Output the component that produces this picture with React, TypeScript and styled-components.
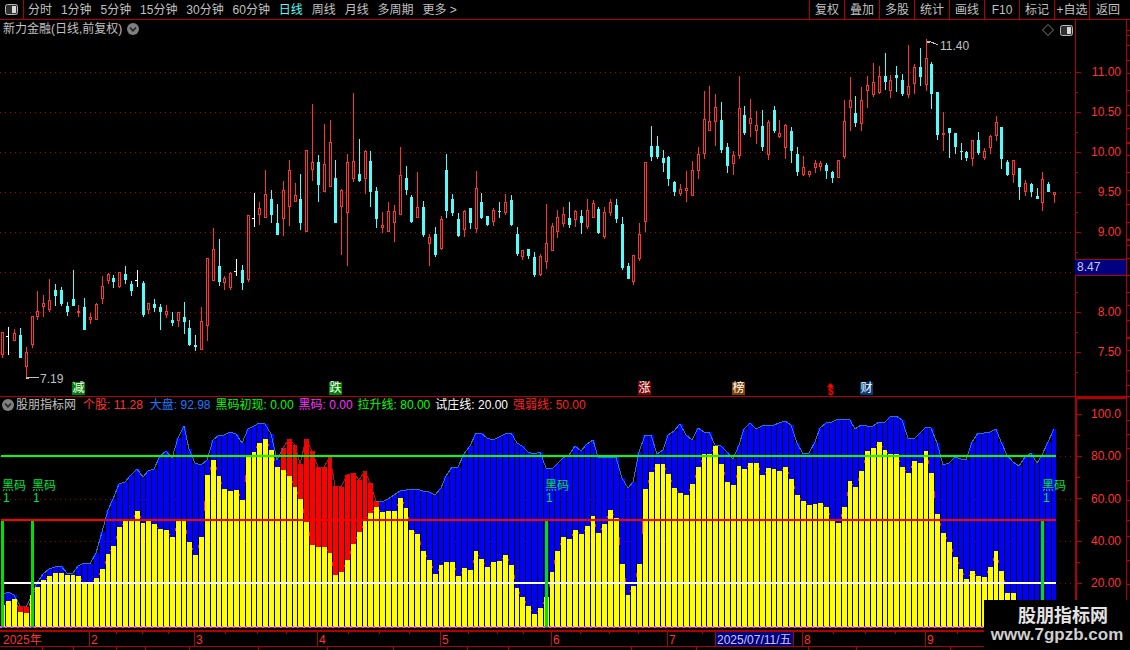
import React from 'react';
import styled, { createGlobalStyle } from 'styled-components';

const RED = '#ff3232';
const LINE = '#b00000';
const CYAN = '#54fcfc';
const FONT = '"Liberation Sans", "Noto Sans CJK SC", sans-serif';

const Global = createGlobalStyle`
  html, body { margin: 0; padding: 0; background: #000; }
  #root { width: 1130px; height: 650px; }
`;

const Page = styled.div`
  position: relative;
  width: 1130px;
  height: 650px;
  overflow: hidden;
  background: #000;
  font: 12px/14px ${FONT};
  color: #c0c0c0;
  display: flex;
  flex-direction: column;
`;

const Toolbar = styled.div`
  display: flex;
  align-items: stretch;
  height: 19px;
  flex: none;
  border-bottom: 1px solid ${LINE};
`;
const PanelToggle = styled.div`
  width: 23px;
  flex: none;
  border-right: 1px solid ${LINE};
  display: flex;
  align-items: center;
  justify-content: center;
`;
const Periods = styled.nav`
  display: flex;
  align-items: center;
  gap: 8.9px;
  padding-left: 4px;
`;
const Period = styled.span<{ $active?: boolean }>`
  white-space: nowrap;
  color: ${p => (p.$active ? CYAN : '#c0c0c0')};
`;
const Tools = styled.div`
  display: flex;
  margin-left: auto;
`;
const Tool = styled.span<{ $wide?: boolean }>`
  width: ${p => (p.$wide ? 41 : 35)}px;
  box-sizing: border-box;
  border-left: 1px solid ${LINE};
  display: flex;
  align-items: center;
  justify-content: ${p => (p.$wide ? 'flex-start' : 'center')};
  padding-left: ${p => (p.$wide ? 6 : 0)}px;
  white-space: nowrap;
`;

const PricePanel = styled.section`
  display: flex;
  height: 376px;
  flex: none;
  border-bottom: 1px solid ${LINE};
`;
const IndicatorPanel = styled.section`
  display: flex;
  height: 233px;
  flex: none;
  border-bottom: 2px solid ${LINE};
`;
const Plot = styled.div`
  position: relative;
  width: 1075px;
  flex: none;
`;
const AxisBox = styled.div`
  position: relative;
  width: 55px;
  flex: none;
`;
const Canvas = styled.svg`
  display: block;
  shape-rendering: crispEdges;
`;
const ChartText = styled.text<{ $fill?: string }>`
  font: 12px ${FONT};
  fill: ${p => p.$fill || RED};
  shape-rendering: auto;
`;

const TitleRow = styled.div`
  position: absolute;
  left: 3px;
  top: 2px;
  display: flex;
  align-items: center;
  gap: 5px;
  white-space: nowrap;
`;
const WindowTools = styled.div`
  position: absolute;
  right: 2px;
  top: 4px;
  display: flex;
  align-items: center;
  gap: 6px;
`;
const Legend = styled.div`
  position: absolute;
  left: 2px;
  top: 1px;
  display: flex;
  align-items: center;
  gap: 5px;
  white-space: nowrap;
`;
const LegendName = styled.span`
  margin: 0 2px 0 -3px;
`;
const LegendItem = styled.span<{ $color: string; $after?: number }>`
  color: ${p => p.$color};
  margin-right: ${p => p.$after || 0}px;
`;
const Marker = styled.span<{ $x: number; $bg: string }>`
  position: absolute;
  left: ${p => p.$x}px;
  top: 362px;
  width: 13px;
  height: 13px;
  background: ${p => p.$bg};
  color: #fff;
  font-size: 12px;
  line-height: 13px;
  text-align: center;
`;
const DollarMark = styled.span`
  position: absolute;
  left: 826px;
  top: 363px;
  width: 9px;
  display: flex;
  flex-direction: column;
  align-items: center;
  color: #ff0000;
  font: bold 10px/9px ${FONT};
`;
const PriceTag = styled.div`
  position: absolute;
  left: 0;
  top: 239px;
  width: 49px;
  height: 15px;
  padding-left: 2px;
  background: #000080;
  border-top: 1px solid ${LINE};
  border-bottom: 1px solid ${LINE};
  border-right: 1px solid ${LINE};
  color: #c8c8e8;
  line-height: 15px;
`;
const DateAxis = styled.div`
  height: 14px;
  flex: none;
  border-bottom: 1px solid ${LINE};
`;
const Footer = styled.div`
  height: 3px;
  flex: none;
`;
const Watermark = styled.div`
  position: absolute;
  right: 0;
  bottom: 0;
  width: 146px;
  height: 50px;
  background: #000;
  color: #e4e4e4;
  display: flex;
  flex-direction: column;
  align-items: center;
  padding-top: 2px;
  box-sizing: border-box;
  font-weight: bold;
`;
const WatermarkTitle = styled.div`
  font: bold 18px/24px "Noto Sans CJK SC", sans-serif;
  margin-left: 12px;
`;
const WatermarkUrl = styled.div`
  font: bold 17px/17px "Liberation Sans", sans-serif;
  color: #cfcfcf;
`;

type Kind = 'r' | 'c' | 'w';
type Row = [number, number, number, number, number, Kind];

const A: Row[] = [
  [8,457,457,525,533,'r'],[25,441,469,469,525,'w'],[44,447,459,483,483,'r'],[62,445,465,534,534,'c'],[80,501,517,560,590,'r'],
  [98,408,408,495,503,'r'],[112,333,393,411,419,'r'],[130,345,370,381,411,'r'],[148,297,361,389,397,'r'],[166,312,330,348,378,'c'],
  [184,321,330,372,378,'c'],[202,366,378,396,408,'c'],[220,270,357,378,378,'c'],[235,375,393,399,411,'r'],[253,354,381,450,450,'c'],
  [271,399,411,420,432,'r'],[289,370,372,420,420,'r'],[307,288,318,357,372,'r'],[325,280,282,303,312,'r'],[340,285,294,306,324,'c'],
  [358,276,277,321,324,'r'],[376,258,282,300,312,'c'],[394,303,312,333,348,'c'],[412,270,300,300,321,'w'],[430,303,309,405,411,'c'],
  [445,369,369,390,402,'r'],[463,357,372,385,396,'c'],[481,372,381,396,450,'c'],[499,375,393,405,414,'r'],[517,396,420,429,438,'c'],
  [535,396,396,423,441,'r'],[553,366,411,426,462,'c'],[568,420,444,495,498,'c'],[586,465,495,501,513,'c'],[604,381,423,510,511,'r'],
  [622,235,235,437,483,'r'],[640,144,207,303,303,'r'],[658,177,258,306,318,'c'],[673,288,294,309,330,'r'],[691,276,279,324,330,'r'],
  [709,237,273,273,288,'w'],[727,255,270,309,330,'c'],[745,105,105,300,306,'r'],[763,39,115,115,141,'w'],[778,66,84,105,135,'r'],
  [796,-30,42,114,114,'r'],[814,30,57,105,129,'c'],[832,72,129,165,165,'c'],[850,3,30,117,168,'r'],[868,-60,-30,81,138,'r'],
  [886,9,45,66,66,'r'],
];
const B: Row[] = [
  [0,282,357,430,450,'c'],[19,211,211,455,455,'r'],[37,72,247,271,303,'r'],[55,225,247,315,366,'c'],[73,132,253,335,336,'r'],
  [91,120,187,322,322,'r'],[106,240,294,429,429,'c'],[124,328,331,380,525,'r'],[142,222,247,398,558,'r'],[160,39,244,296,306,'r'],
  [178,177,282,303,306,'c'],[196,210,214,296,342,'r'],[211,213,243,336,381,'c'],[229,321,333,417,444,'c'],[247,396,435,443,459,'r'],
  [265,366,393,456,456,'r'],[283,375,393,429,486,'r'],[301,201,286,404,405,'r'],[319,258,294,330,345,'c'],[334,345,351,426,429,'c'],
  [352,276,381,413,414,'r'],[370,363,381,465,471,'c'],[388,462,471,491,558,'r'],[406,441,462,525,531,'c'],[424,408,417,507,510,'r'],
  [439,222,270,393,414,'c'],[457,342,357,399,408,'c'],[475,399,417,468,471,'c'],[493,390,393,450,471,'r'],[511,384,384,429,447,'c'],
  [529,273,324,447,459,'r'],[544,339,366,414,417,'c'],[562,408,408,435,438,'c'],[580,384,390,426,438,'r'],[598,366,393,396,414,'c'],
  [616,342,366,399,405,'r'],[634,345,360,435,438,'c'],[652,441,462,522,528,'c'],[667,510,511,530,540,'r'],[685,507,507,528,537,'c'],
  [703,516,531,585,591,'c'],[721,522,528,585,588,'r'],[739,372,489,545,567,'r'],[757,429,438,513,513,'r'],[772,390,411,456,474,'r'],
  [790,381,402,432,441,'r'],[808,366,414,435,444,'c'],[826,390,393,420,441,'r'],[844,390,408,429,462,'c'],[862,357,390,441,447,'r'],
  [880,360,369,414,414,'r'],[895,381,387,459,462,'c'],[913,381,396,471,477,'r'],[931,357,366,399,408,'r'],[949,357,375,417,429,'c'],
  [967,411,432,564,570,'c'],[985,549,558,597,597,'c'],[1000,525,526,606,615,'r'],[1018,429,462,537,543,'r'],
];
const C: Row[] = [
  [16,396,396,575,607,'r'],[34,288,348,381,392,'c'],[52,318,348,381,387,'c'],[70,360,384,399,426,'c'],[85,378,381,447,468,'c'],
  [103,453,456,486,498,'c'],[121,462,477,492,498,'r'],[139,423,474,483,516,'r'],[157,393,420,497,498,'r'],[175,351,372,423,447,'r'],
  [193,183,267,372,387,'r'],[208,168,273,303,303,'r'],[226,192,231,276,348,'r'],[244,216,270,360,369,'c'],[262,339,351,408,429,'c'],
  [280,363,375,402,435,'r'],[298,138,234,378,387,'r'],[313,228,255,309,315,'c'],[331,207,264,282,321,'r'],[349,243,285,303,342,'r'],
  [367,240,288,351,363,'c'],[385,270,276,375,390,'r'],[403,228,240,303,309,'c'],[418,270,309,321,324,'r'],[436,282,285,354,387,'r'],
  [454,291,303,363,399,'c'],[472,351,372,426,438,'c'],[490,378,411,435,438,'r'],[508,423,424,435,441,'r'],[526,390,399,414,429,'r'],
  [541,393,400,411,423,'r'],[559,399,405,423,447,'c'],[577,423,426,444,459,'c'],[595,390,391,443,444,'r'],[613,210,273,381,387,'r'],
  [631,141,210,234,303,'r'],[646,198,249,279,291,'c'],[664,171,210,282,303,'r'],[682,138,165,183,234,'r'],[700,99,156,195,201,'r'],
  [718,108,138,189,192,'r'],[736,69,138,156,180,'c'],[751,135,150,183,204,'r'],[769,108,135,144,186,'c'],[787,132,150,192,198,'c'],
  [805,45,168,195,204,'r'],[823,102,111,162,192,'r'],[841,54,111,141,168,'c'],[859,27,84,165,183,'r'],[874,96,102,192,237,'c'],
  [892,186,186,315,330,'c'],[910,246,309,315,363,'r'],[928,294,294,309,384,'c'],[946,309,309,351,372,'c'],[964,339,363,366,390,'c'],
  [979,363,366,384,393,'c'],[997,330,330,387,408,'r'],[1015,306,330,369,375,'c'],[1033,354,363,385,390,'r'],[1051,315,318,354,372,'r'],
  [1069,258,276,318,333,'r'],[1084,291,291,387,417,'c'],[1102,390,396,435,438,'c'],[1120,390,391,435,459,'r'],[1138,414,414,471,510,'c'],
  [1156,450,459,486,498,'r'],[1174,459,462,486,501,'c'],[1192,474,498,507,507,'c'],[1207,426,447,518,543,'r'],[1225,456,462,486,486,'c'],
  [1243,486,487,495,519,'r'],
];

interface Candle { x: number; wt: number; bt: number; bb: number; wb: number; kind: Kind; }
const toCandles = (rows: Row[], x0: number, y0: number): Candle[] =>
  rows.map(([z, a, b, c, d, kind]) => ({
    x: x0 + Math.floor(z / 3),
    wt: Math.round(y0 + a / 3),
    bt: Math.round(y0 + b / 3),
    bb: Math.round(y0 + c / 3),
    wb: Math.round(y0 + d / 3),
    kind,
  }));
const candles = [...toCandles(A, 0, 180), ...toCandles(B, 300, 80), ...toCandles(C, 640, 30)];

const yellowZ = [
  555,543,537,576,579,525,500,480,468,459,459,465,465,468,486,486,474,447,402,378,321,303,303,273,309,303,312,327,330,351,303,303,366,405,351,165,120,168,207,213,210,240,107,96,68,57,90,141,150,168,201,
  237,306,375,381,381,399,465,456,420,372,336,303,279,261,276,273,273,234,264,330,342,393,420,462,435,426,426,468,444,450,393,417,441,426,423,405,435,504,531,558,582,564,531,456,393,351,357,330,342,318,288,339,
  312,270,295,432,525,498,432,207,156,132,132,162,204,219,225,192,141,102,102,78,132,186,195,138,147,129,129,165,144,147,153,141,177,225,243,255,252,249,261,303,309,261,183,201,153,93,84,66,90,102,102,
  141,159,123,129,93,159,282,339,366,411,447,477,453,468,471,441,393,453,519,519,900,900,900,900,900,900,900,
];
const coverZ = [
  525,517,525,558,561,525,490,463,448,440,437,459,459,437,428,433,400,336,270,238,193,187,165,147,170,152,147,108,93,115,55,18,87,130,135,120,60,45,44,37,41,68,27,18,10,13,42,120,84,57,75,
  132,57,93,142,141,111,198,200,165,159,180,153,189,243,246,237,225,214,211,208,208,214,217,225,205,168,142,142,103,78,40,40,55,60,52,42,40,70,78,95,103,97,145,147,132,115,105,78,93,72,60,110,
  110,112,112,175,205,185,95,46,46,103,90,46,33,13,44,60,24,36,36,75,78,97,116,75,28,10,28,18,16,16,10,3,15,70,103,100,66,25,8,5,-3,-3,0,28,15,18,18,
  5,5,-10,-12,0,55,58,40,20,25,68,135,130,112,118,120,65,40,40,37,28,65,105,125,138,112,100,130,105,65,27,
];
const zy = (z: number) => Math.round(420 + z / 3);
const isRed = (i: number) => i === 3 || i === 4 || (i >= 48 && i <= 64);
const BASE = 627;

const barSlots = candles.map((c, i) => {
  const left = Math.max(1, c.x - 2);
  const next = i < candles.length - 1 ? candles[i + 1].x - 2 : c.x + 3;
  return { left, width: next - left - 1, cx: c.x };
});

const ToggleIcon = () => (
  <svg width="13" height="11" viewBox="0 0 13 11">
    <rect x="0.5" y="0.5" width="12" height="10" rx="2" fill="#303030" stroke="#b8b8b8" />
    <rect x="7" y="2" width="4" height="7" fill="#d8d8d8" />
  </svg>
);
const DropDot = () => (
  <svg width="12" height="12" viewBox="0 0 12 12">
    <circle cx="6" cy="6" r="6" fill="#808080" />
    <path d="M3 4.5 L6 7.8 L9 4.5" fill="none" stroke="#202020" strokeWidth="1.5" />
  </svg>
);
const DiamondIcon = () => (
  <svg width="12" height="12" viewBox="0 0 12 12">
    <path d="M6 0.5 L11.5 6 L6 11.5 L0.5 6 Z" fill="none" stroke="#808080" />
  </svg>
);
const UpArrow = () => (
  <svg width="7" height="4" viewBox="0 0 7 4">
    <path d="M3.5 0 L7 4 L0 4 Z" fill="#ff0000" />
  </svg>
);

const priceGrid = [72, 112, 152, 192, 232, 272, 312, 352];
const periods = ['分时', '1分钟', '5分钟', '15分钟', '30分钟', '60分钟', '日线', '周线', '月线', '多周期', '更多 >'];
const tools = ['复权', '叠加', '多股', '统计', '画线', 'F10', '标记', '+自选'];
const legendItems: [string, string, number][] = [
  ['个股: 11.28', '#ff3232', 2],
  ['大盘: 92.98', '#1e78ff', 0],
  ['黑码初现: 0.00', '#00ff00', 0],
  ['黑码: 0.00', '#ff32ff', 0],
  ['拉升线: 80.00', '#00ff00', 0],
  ['试庄线: 20.00', '#ffffff', 0],
  ['强弱线: 50.00', '#ff2020', 0],
];

const PriceChart = () => (
  <Canvas width="1075" height="376" viewBox="0 20 1075 376">
    {priceGrid.map(y => (
      <line key={y} x1="0" x2="1075" y1={y + 0.5} y2={y + 0.5} stroke="#b00000" strokeDasharray="1 4" />
    ))}
    {candles.map((c, i) => {
      const color = c.kind === 'r' ? RED : c.kind === 'c' ? CYAN : '#ffffff';
      return (
        <g key={i} fill={color}>
          <rect x={c.x} y={c.wt} width="1" height={Math.max(1, c.wb - c.wt)} />
          {c.kind === 'w' ? (
            <rect x={c.x - 2} y={c.bt} width="2" height="1" />
          ) : (
            <rect x={c.x - 1} y={c.bt} width="3" height={Math.max(1, c.bb - c.bt)} />
          )}
          {c.kind === 'r' && c.bb - c.bt > 2 && (
            <rect x={c.x} y={c.bt + 1} width="1" height={c.bb - c.bt - 2} fill="#000" />
          )}
        </g>
      );
    })}
    <g fill="#c0c0c0">
      <rect x="26" y="377" width="3" height="2" />
      <rect x="28" y="377" width="11" height="1" />
      <rect x="927" y="41" width="3" height="2" />
      <path d="M929 41 L938 45" stroke="#c0c0c0" fill="none" />
    </g>
    <ChartText x="40" y="383" $fill="#c0c0c0">7.19</ChartText>
    <ChartText x="940" y="50" $fill="#c0c0c0">11.40</ChartText>
  </Canvas>
);

const PriceAxis = () => (
  <Canvas width="55" height="376" viewBox="1075 20 55 376">
    <rect x="1075" y="20" width="1" height="376" fill={LINE} />
    <rect x="1126" y="20" width="1" height="376" fill={LINE} />
    {priceGrid.map(y => (
      <g key={y} fill={LINE}>
        <rect x="1075" y={y} width="6" height="1" />
        <rect x="1075" y={y + 20} width="3" height="1" />
      </g>
    ))}
    {[30, 35, 45, 60, 73, 90, 105, 115, 128, 155, 172, 190, 204, 222, 245, 258, 275, 292, 305, 320, 350, 370, 385].map(y => (
      <rect key={y} x="1127" y={y} width="3" height="1" fill={LINE} />
    ))}
    {[142, 239, 337].map(y => (
      <rect key={y} x="1127" y={y} width="3" height="2" fill={LINE} />
    ))}
    {[['11.00', 72], ['10.50', 112], ['10.00', 152], ['9.50', 192], ['9.00', 232], ['8.50', 272], ['8.00', 312], ['7.50', 352]].map(([t, y]) => (
      <ChartText key={t as string} x="1121" y={(y as number) + 4} textAnchor="end">{t}</ChartText>
    ))}
  </Canvas>
);

const blackCode = [
  { x: 2, n: 3 },
  { x: 32, n: 33 },
  { x: 545, n: 546 },
  { x: 1042, n: 1043 },
];
const greenBars = [0, 5, 93, 178];

const IndicatorChart = () => (
  <Canvas width="1075" height="233" viewBox="0 397 1075 233">
    {[456, 499, 541, 583].map(y => (
      <line key={y} x1="0" x2="1075" y1={y + 0.5} y2={y + 0.5} stroke="#a00000" strokeDasharray="1 4" />
    ))}
    {barSlots.map((s, i) => {
      const top = zy(coverZ[i]);
      const fill = isRed(i) ? '#ff0000' : '#0000ff';
      return <rect key={i} x={s.left} y={top} width={s.width} height={BASE - top} fill={fill} />;
    })}
    {barSlots.slice(1).map((s, i) => {
      const j = i + 1;
      const a = coverZ[j - 1];
      const b = coverZ[j];
      const red = isRed(j) && isRed(j - 1);
      return (
        <line
          key={j}
          x1={barSlots[j - 1].cx}
          y1={zy(a)}
          x2={s.cx}
          y2={zy(b)}
          stroke={red ? '#c01010' : '#1a78d8'}
          strokeWidth="1"
        />
      );
    })}
    {barSlots.map((s, i) => {
      const y = yellowZ[i];
      if (y >= 900) return null;
      const top = zy(y);
      return <rect key={i} x={s.left} y={top} width={s.width} height={BASE - top} fill="#ffff00" />;
    })}
    {barSlots.slice(1).map((s, i) => {
      const a = yellowZ[i];
      const b = yellowZ[i + 1];
      const d = Math.abs(a - b);
      if (d < 12 || a >= 900 || b >= 900) return null;
      const h = Math.max(1, Math.round(d / 18));
      const mid = zy((a + b) / 2);
      return <rect key={i} x={s.left - 1} y={mid - Math.floor(h / 2)} width="1" height={h} fill="#ff2020" />;
    })}
    <rect x="1" y="455" width="1055" height="2" fill="#00ff00" />
    <rect x="1" y="519" width="1055" height="2" fill="#ff0000" />
    <rect x="1" y="582" width="1055" height="2" fill="#ffffff" />
    {greenBars.map(i => (
      <rect key={i} x={Math.max(1, candles[i].x - 1)} y="521" width="3" height="106" fill="#00e000" />
    ))}
    <rect x="1" y="627" width="1055" height="1" fill="#7a20b0" />
    {barSlots.map((s, i) => (
      <rect key={i} x={s.left - 1} y="626" width="2" height="2" fill="#ff40ff" />
    ))}
    {blackCode.map(b => (
      <g key={b.x}>
        <ChartText x={b.x} y="490" $fill="#00e040">黑码</ChartText>
        <ChartText x={b.n} y="502" $fill="#00e040">1</ChartText>
      </g>
    ))}
  </Canvas>
);

const IndicatorAxis = () => (
  <Canvas width="55" height="233" viewBox="1075 397 55 233">
    <rect x="1075" y="397" width="2" height="233" fill={LINE} />
    <rect x="1075" y="397" width="52" height="2" fill={LINE} />
    <rect x="1126" y="397" width="1" height="233" fill={LINE} />
    {[414, 456, 498, 541, 583].map(y => (
      <rect key={y} x="1077" y={y} width="5" height="1" fill={LINE} />
    ))}
    {[435, 477, 520, 562, 604].map(y => (
      <rect key={y} x="1077" y={y} width="3" height="1" fill={LINE} />
    ))}
    {[420, 434, 448, 480, 500, 520, 536, 560, 584].map(y => (
      <rect key={y} x="1127" y={y} width="3" height="1" fill={LINE} />
    ))}
    {[['100.0', 414], ['80.00', 456], ['60.00', 499], ['40.00', 541], ['20.00', 583]].map(([t, y]) => (
      <ChartText key={t as string} x="1121" y={(y as number) + 4} textAnchor="end">{t}</ChartText>
    ))}
  </Canvas>
);

const dateDividers = [89, 194, 317, 440, 551, 667, 715, 793, 802, 925];
const dateTicks = [116, 142, 168, 225, 257, 286, 348, 379, 409, 468, 497, 523, 580, 609, 638, 702, 833, 865, 895, 957];
const dateLabels: [string, number][] = [['2025年', 3], ['2', 91], ['3', 196], ['4', 319], ['5', 442], ['6', 553], ['7', 669], ['8', 804], ['9', 927]];
const footerTicks = [42, 73, 116, 145, 189, 258, 327, 393, 467, 508, 631, 696, 808, 856, 950];

const TimeAxis = () => (
  <Canvas width="1130" height="14" viewBox="0 632 1130 14">
    <rect x="716" y="632" width="77" height="14" fill="#000080" />
    {dateDividers.map(x => (
      <rect key={x} x={x} y="632" width="1" height="14" fill={LINE} />
    ))}
    {dateTicks.map(x => (
      <rect key={x} x={x} y="632" width="1" height="2" fill={LINE} />
    ))}
    {dateLabels.map(([t, x]) => (
      <ChartText key={t} x={x} y="644">{t}</ChartText>
    ))}
    <ChartText x="717" y="644" $fill="#c8c8f0">2025/07/11/五</ChartText>
  </Canvas>
);

const FooterTicks = () => (
  <Canvas width="1130" height="3" viewBox="0 647 1130 3">
    {footerTicks.map(x => (
      <rect key={x} x={x} y="647" width="1" height="3" fill={LINE} />
    ))}
  </Canvas>
);

export default function App() {
  return (
    <Page>
      <Global />
      <Toolbar>
        <PanelToggle><ToggleIcon /></PanelToggle>
        <Periods>
          {periods.map(p => (
            <Period key={p} $active={p === '日线'}>{p}</Period>
          ))}
        </Periods>
        <Tools>
          {tools.map(t => (
            <Tool key={t}>{t}</Tool>
          ))}
          <Tool $wide>返回</Tool>
        </Tools>
      </Toolbar>

      <PricePanel>
        <Plot>
          <PriceChart />
          <TitleRow>
            <span>新力金融(日线,前复权)</span>
            <DropDot />
          </TitleRow>
          <WindowTools>
            <DiamondIcon />
            <ToggleIcon />
          </WindowTools>
          <Marker $x={72} $bg="#008000">减</Marker>
          <Marker $x={329} $bg="#008000">跌</Marker>
          <Marker $x={638} $bg="#800000">涨</Marker>
          <Marker $x={732} $bg="#804000">榜</Marker>
          <DollarMark><UpArrow />$</DollarMark>
          <Marker $x={860} $bg="#003a78">财</Marker>
        </Plot>
        <AxisBox>
          <PriceAxis />
          <PriceTag>8.47</PriceTag>
        </AxisBox>
      </PricePanel>

      <IndicatorPanel>
        <Plot>
          <IndicatorChart />
          <Legend>
            <DropDot />
            <LegendName>股朋指标网</LegendName>
            {legendItems.map(([t, c, after]) => (
              <LegendItem key={t} $color={c} $after={after}>{t}</LegendItem>
            ))}
          </Legend>
        </Plot>
        <AxisBox>
          <IndicatorAxis />
        </AxisBox>
      </IndicatorPanel>

      <DateAxis>
        <TimeAxis />
      </DateAxis>
      <Footer>
        <FooterTicks />
      </Footer>

      <Watermark>
        <WatermarkTitle>股朋指标网</WatermarkTitle>
        <WatermarkUrl>www.7gpzb.com</WatermarkUrl>
      </Watermark>
    </Page>
  );
}
